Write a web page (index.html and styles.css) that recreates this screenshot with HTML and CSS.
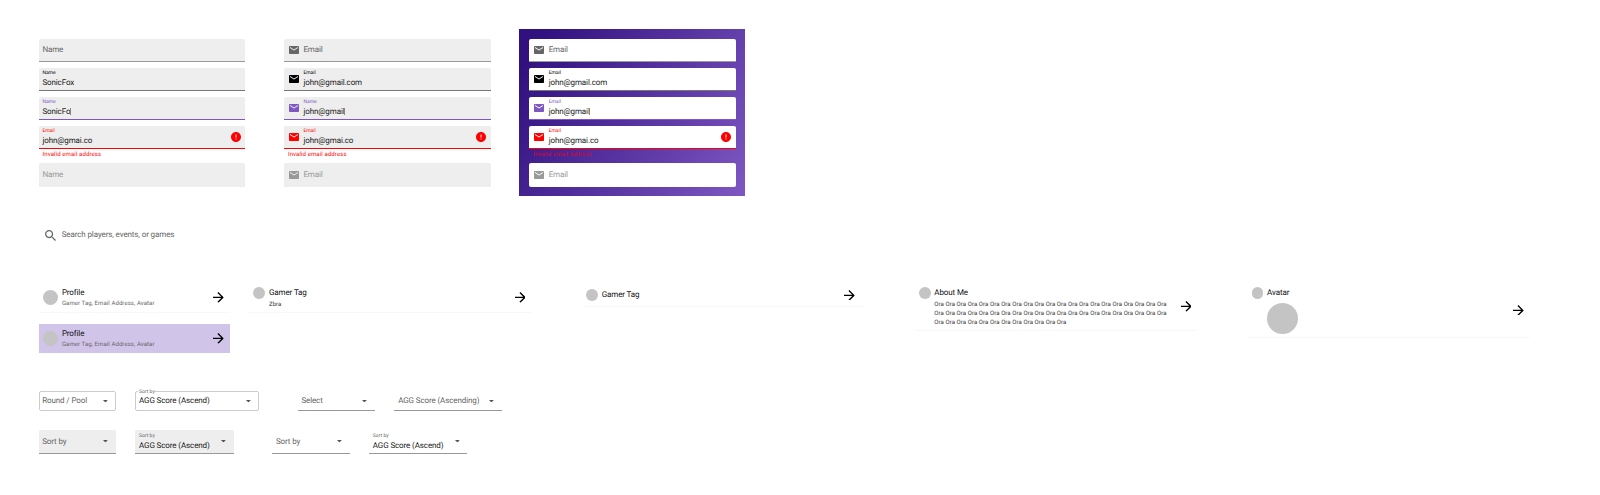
FILE: index.html
```html
<!DOCTYPE html>
<html lang="en">
<head>
<meta charset="utf-8">
<title>Form components</title>
<link rel="stylesheet" href="styles.css">
</head>
<body>
<svg class="defs" width="0" height="0">
  <symbol id="mail" viewBox="2 4 20 16"><path d="M20 4H4c-1.100 0-1.990.9-1.990 2L2 18c0 1.100.9 2 2 2h16c1.100 0 2-.9 2-2V6c0-1.100-.9-2-2-2zm0 4l-8 5-8-5V6l8 5 8-5v2z"/></symbol>
  <symbol id="error" viewBox="2 2 20 20"><path d="M12 2C6.480 2 2 6.480 2 12s4.480 10 10 10 10-4.480 10-10S17.520 2 12 2zm1 15h-2v-2h2v2zm0-4h-2V7h2v6z"/></symbol>
  <symbol id="arrow" viewBox="4 4 16 16"><path d="M12 4l-1.410 1.410L16.170 11H4v2h12.170l-5.580 5.590L12 20l8-8z"/></symbol>
  <symbol id="search" viewBox="3 3 17.500 17.500"><path d="M15.500 14h-.79l-.28-.27C15.410 12.590 16 11.110 16 9.500 16 5.910 13.090 3 9.500 3S3 5.910 3 9.500 5.910 16 9.500 16c1.610 0 3.090-.59 4.230-1.570l.27.28v.79l5 4.990L20.490 19l-4.990-5zm-6 0C7.010 14 5 11.990 5 9.500S7.010 5 9.500 5 14 7.010 14 9.500 11.990 14 9.500 14z"/></symbol>
  <symbol id="down" viewBox="7 10 10 5"><path d="M7 10l5 5 5-5z"/></symbol>
</svg>

<section class="fields">
  <div class="column">
    <div class="field"><span class="hint">Name</span></div>
    <div class="field filled"><div class="stack"><span class="label">Name</span><span class="value">SonicFox</span></div></div>
    <div class="field focused"><div class="stack"><span class="label">Name</span><span class="value">SonicFo<i class="caret"></i></span></div></div>
    <div class="field invalid"><div class="stack"><span class="label">Email</span><span class="value">john@gmai.co</span></div><svg class="error"><use href="#error"/></svg></div>
    <p class="message">Invalid email address</p>
    <div class="field disabled"><span class="hint">Name</span></div>
  </div>
  <div class="column">
    <div class="field"><svg class="mail"><use href="#mail"/></svg><span class="hint">Email</span></div>
    <div class="field filled"><svg class="mail"><use href="#mail"/></svg><div class="stack"><span class="label">Email</span><span class="value">john@gmail.com</span></div></div>
    <div class="field focused"><svg class="mail"><use href="#mail"/></svg><div class="stack"><span class="label">Name</span><span class="value">john@gmail<i class="caret"></i></span></div></div>
    <div class="field invalid"><svg class="mail"><use href="#mail"/></svg><div class="stack"><span class="label">Email</span><span class="value">john@gmai.co</span></div><svg class="error"><use href="#error"/></svg></div>
    <p class="message">Invalid email address</p>
    <div class="field disabled"><svg class="mail"><use href="#mail"/></svg><span class="hint">Email</span></div>
  </div>
  <div class="column panel">
    <div class="field"><svg class="mail"><use href="#mail"/></svg><span class="hint">Email</span></div>
    <div class="field filled"><svg class="mail"><use href="#mail"/></svg><div class="stack"><span class="label">Email</span><span class="value">john@gmail.com</span></div></div>
    <div class="field focused"><svg class="mail"><use href="#mail"/></svg><div class="stack"><span class="label">Email</span><span class="value">john@gmail<i class="caret"></i></span></div></div>
    <div class="field invalid"><svg class="mail"><use href="#mail"/></svg><div class="stack"><span class="label">Email</span><span class="value">john@gmai.co</span></div><svg class="error"><use href="#error"/></svg></div>
    <p class="message">Invalid email address</p>
    <div class="field disabled"><svg class="mail"><use href="#mail"/></svg><span class="hint">Email</span></div>
  </div>
</section>

<section class="search"><svg class="lens"><use href="#search"/></svg><span>Search players, events, or games</span></section>

<section class="lists">
  <div class="profiles">
    <div class="item"><i class="dot big"></i><div class="text"><span class="title">Profile</span><span class="sub muted">Gamer Tag, Email Address, Avatar</span></div><svg class="go"><use href="#arrow"/></svg></div>
    <div class="item active"><i class="dot big"></i><div class="text"><span class="title">Profile</span><span class="sub muted">Gamer Tag, Email Address, Avatar</span></div><svg class="go"><use href="#arrow"/></svg></div>
  </div>
  <div class="item wide tag"><i class="dot"></i><div class="text"><span class="title">Gamer Tag</span><span class="sub">Zbra</span></div><svg class="go"><use href="#arrow"/></svg></div>
  <div class="item wide single"><i class="dot"></i><div class="text"><span class="title">Gamer Tag</span></div><svg class="go"><use href="#arrow"/></svg></div>
  <div class="item wide about"><i class="dot"></i><div class="text"><span class="title">About Me</span><span class="sub">Ora Ora Ora Ora Ora Ora Ora Ora Ora Ora Ora Ora Ora Ora Ora Ora Ora Ora Ora Ora Ora<br>Ora Ora Ora Ora Ora Ora Ora Ora Ora Ora Ora Ora Ora Ora Ora Ora Ora Ora Ora Ora Ora<br>Ora Ora Ora Ora Ora Ora Ora Ora Ora Ora Ora Ora</span></div><svg class="go"><use href="#arrow"/></svg></div>
  <div class="item wide avatar"><i class="dot"></i><div class="text"><span class="title">Avatar</span><i class="picture"></i></div><svg class="go"><use href="#arrow"/></svg></div>
</section>

<section class="selects">
  <div class="row">
    <div class="select outlined short"><span>Round / Pool</span><svg class="down"><use href="#down"/></svg></div>
    <div class="select outlined chosen long"><span class="legend">Sort by</span><span>AGG Score (Ascend)</span><svg class="down"><use href="#down"/></svg></div>
    <div class="select line short first-line"><span>Select</span><svg class="down"><use href="#down"/></svg></div>
    <div class="select line ascending"><span>AGG Score (Ascending)</span><svg class="down"><use href="#down"/></svg></div>
  </div>
  <div class="row tall">
    <div class="select line solid short"><span>Sort by</span><svg class="down"><use href="#down"/></svg></div>
    <div class="select line solid medium"><div class="stack"><span class="label">Sort by</span><span class="value">AGG Score (Ascend)</span></div><svg class="down"><use href="#down"/></svg></div>
    <div class="select line short second-line"><span>Sort by</span><svg class="down"><use href="#down"/></svg></div>
    <div class="select line medium"><div class="stack"><span class="label">Sort by</span><span class="value">AGG Score (Ascend)</span></div><svg class="down"><use href="#down"/></svg></div>
  </div>
</section>
</body>
</html>
```
FILE: styles.css
```css
* { box-sizing: border-box; }
body { margin: 0; width: 1600px; height: 495px; overflow: hidden; background: #fff; color: #212121; font-family: Roboto, sans-serif; font-size: 8px; line-height: 10px; letter-spacing: -0.110px; white-space: nowrap; text-rendering: geometricPrecision; }
svg { display: block; flex: none; fill: currentColor; }
.defs { position: absolute; }

.fields { display: flex; height: 196px; padding: 29px 0 0 38.700px; }
.column { width: 206.700px; margin-right: 38.700px; padding-top: 10px; }
.panel { width: 226px; height: 167.300px; margin: 0 0 0 -10.200px; padding: 10px 9.500px 0 10px; background: linear-gradient(120deg, #311180 8%, #7e57c2 100%); }
.field { display: flex; align-items: center; height: 23.200px; margin-bottom: 5.800px; padding: 0 4.500px 0 3.700px; border-bottom: 1px solid #9a9a9a; border-radius: 2px 2px 0 0; background: #eee; color: #666; }
.panel .field { background: #fff; }
.filled { border-color: #777; color: #000; }
.focused { border-color: #7e57c2; color: #7e57c2; }
.invalid { margin-bottom: 0; border-color: #f00; color: #f00; }
.disabled { border: 0; color: #999; }
.panel .disabled { border-radius: 2px; }
.mail { width: 10px; height: 8px; margin: 0 4.700px 0 1px; }
.error { width: 10px; height: 10px; margin-left: auto; }
.stack { display: flex; flex-direction: column; padding-top: 0.500px; }
.label { font-size: 5px; line-height: 7px; letter-spacing: -0.040px; }
.value { height: 11px; line-height: 11px; color: #212121; }
.caret { display: inline-block; width: 0.500px; height: 7px; margin-left: -0.500px; background: #888; vertical-align: -1px; }
.message { height: 14.300px; margin: 0; padding: 1px 0 0 3.900px; color: #f00; font-size: 6px; line-height: 9px; letter-spacing: 0.110px; }
.panel .message { color: #d5082e; }

.search { display: flex; align-items: center; height: 20px; margin-top: 29px; padding-left: 45px; color: #666; }
.lens { width: 11px; height: 11px; margin-right: 5.700px; }

.lists { display: flex; align-items: flex-start; height: 71px; margin-top: 38.500px; padding-left: 38.700px; }
.profiles { width: 191.600px; margin-right: 19.200px; }
.item { display: flex; align-items: center; height: 29px; padding: 0 6px 0 4px; border-bottom: 1px solid #f8f8f8; color: #111; }
.active { margin-top: 11.500px; border: 0; background: #d1c4e9; }
.wide { width: 282.500px; align-items: stretch; margin-right: 50.200px; padding: 3.500px 6.500px 0 4px; }
.single { height: 23px; padding-top: 5.500px; padding-right: 10px; }
.about { height: 47.500px; padding-right: 6px; }
.avatar { height: 54px; }
.dot { flex: none; width: 11.800px; height: 11.800px; margin-right: 3.700px; border-radius: 50%; background: #c4c4c4; }
.big { width: 15.500px; height: 15.500px; }
.text { display: flex; flex-direction: column; padding-top: 1px; }
.title { line-height: 10px; }
.sub { padding-top: 1.500px; color: #333; font-size: 6px; line-height: 9.100px; letter-spacing: 0.085px; }
.muted { color: #666; line-height: 9px; }
.go { width: 10.800px; height: 10.800px; margin-left: auto; color: #000; align-self: center; }
.wide .go { margin-top: -3.500px; }
.single .go { margin-top: -4.500px; }
.picture { width: 31.300px; height: 31.300px; margin-top: 4.500px; border-radius: 50%; background: #c4c4c4; }

.selects { padding: 36.800px 0 0 38.500px; color: #666; }
.row { display: flex; height: 38.800px; }
.select { display: flex; align-items: center; justify-content: space-between; height: 20px; margin-right: 19.300px; padding: 0 7.900px 0 3.700px; position: relative; }
.outlined { border: 1px solid #ccc; border-radius: 2px; padding: 0 6.900px 0 2.700px; }
.chosen { color: #212121; }
.legend { position: absolute; top: -3.500px; left: 2.200px; padding: 0 0.500px; background: #fff; color: #666; font-size: 5px; line-height: 6px; letter-spacing: 0.020px; }
.line { border-bottom: 1px solid #999; }
.tall .select { height: 24.200px; }
.solid { border-radius: 2px 2px 0 0; background: #eee; }
.short { width: 77.500px; }
.long { width: 123.800px; }
.medium { width: 98.400px; }
.ascending { width: 107.700px; }
.first-line { margin-left: 19.300px; }
.second-line { margin-left: 19.300px; }
.down { width: 4.850px; height: 2.500px; color: #555; }
.selects .stack { padding-top: 0.500px; }
.selects .label { letter-spacing: 0.020px; }
```
